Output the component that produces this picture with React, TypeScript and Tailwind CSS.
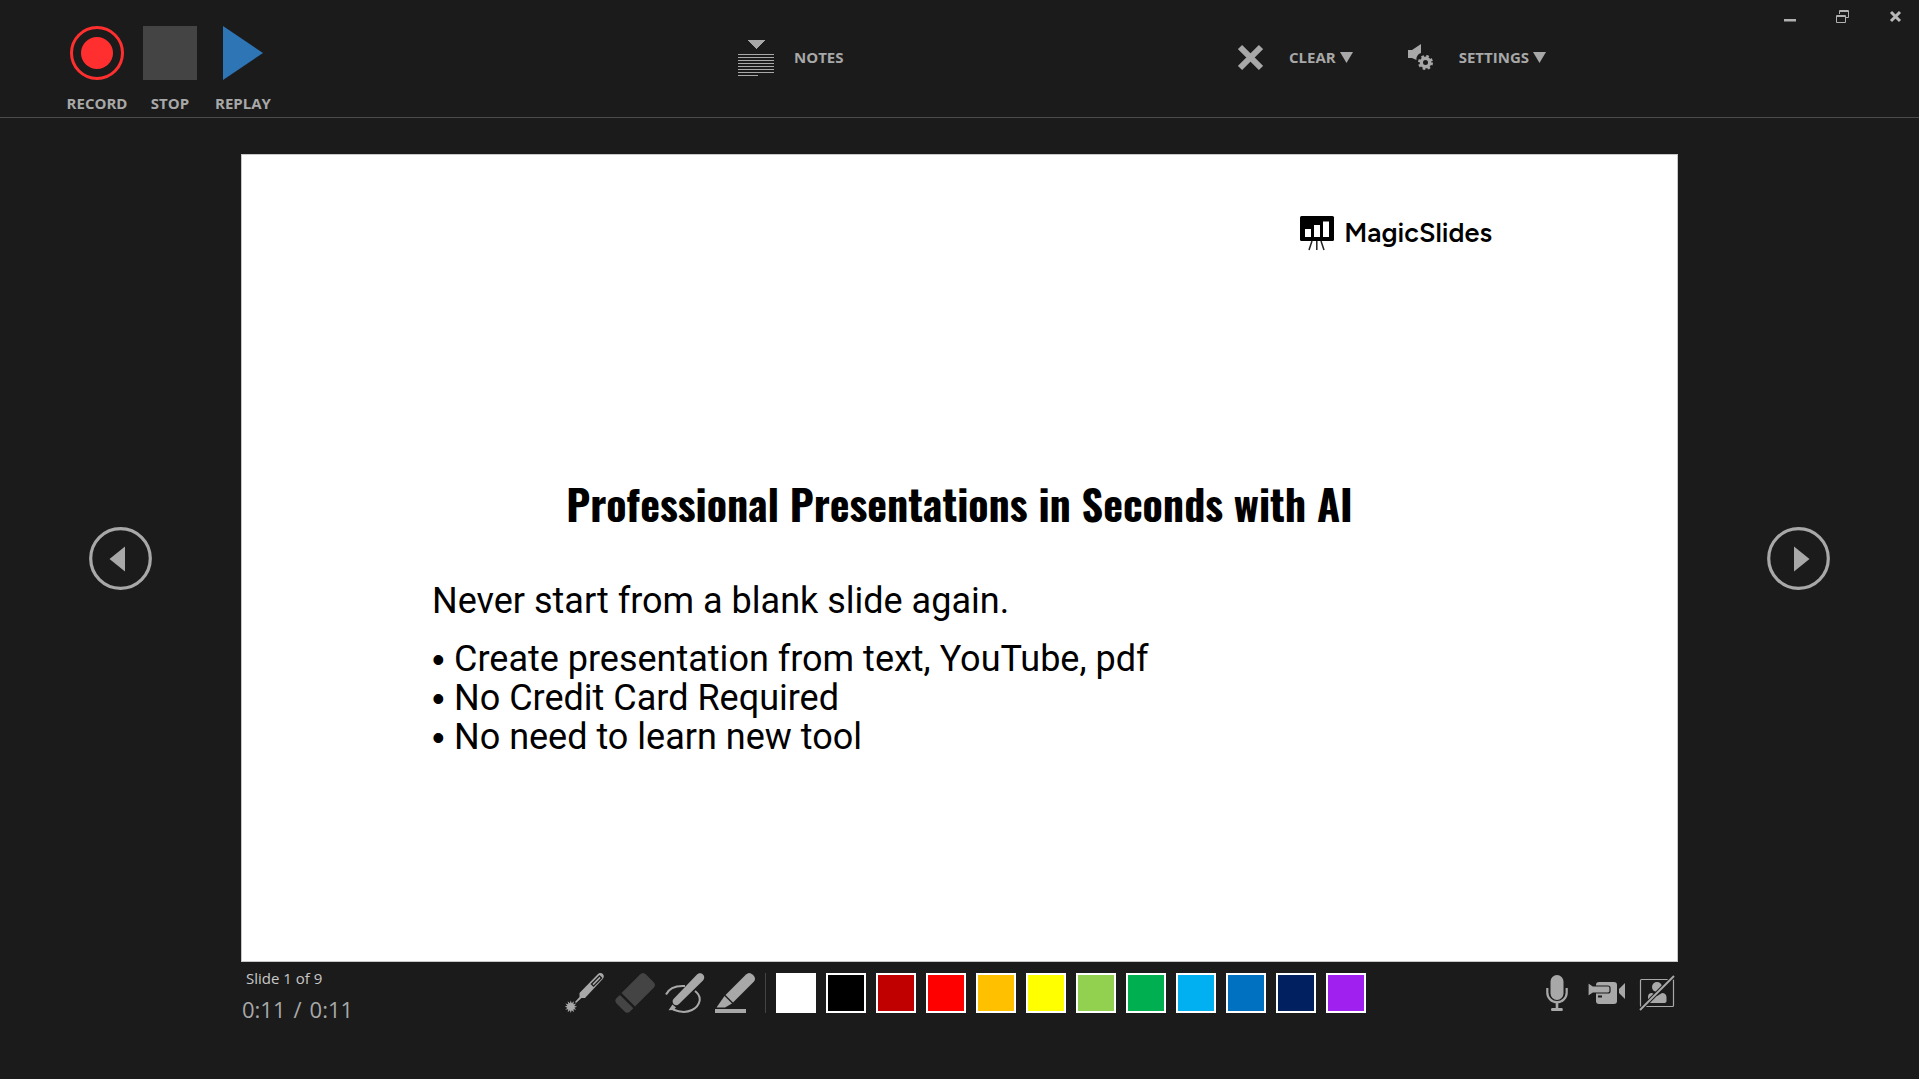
import React from "react";

const swatches = [
  { name: "White", fill: "bg-white" },
  { name: "Black", fill: "bg-black" },
  { name: "Dark red", fill: "bg-[#c00000]" },
  { name: "Red", fill: "bg-[#ff0000]" },
  { name: "Orange", fill: "bg-[#ffc000]" },
  { name: "Yellow", fill: "bg-[#ffff00]" },
  { name: "Light green", fill: "bg-[#92d050]" },
  { name: "Green", fill: "bg-[#00b050]" },
  { name: "Light blue", fill: "bg-[#00b0f0]" },
  { name: "Blue", fill: "bg-[#0070c0]" },
  { name: "Dark blue", fill: "bg-[#002060]" },
  { name: "Purple", fill: "bg-[#a020f0]" },
];

const bullets = [
  "Create presentation from text, YouTube, pdf",
  "No Credit Card Required",
  "No need to learn new tool",
];

// Twelve-pointed spark at the tip of the laser pointer.
const spark = Array.from({ length: 24 }, (_, i) => {
  const r = i % 2 ? 3.6 : 6.3;
  const a = (i * Math.PI) / 12;
  return `${(5.8 + r * Math.sin(a)).toFixed(2)},${(33.7 - r * Math.cos(a)).toFixed(2)}`;
}).join(" ");

function TransportButton({ label, children }: { label: string; children: React.ReactNode }) {
  return (
    <button className="flex w-[58px] flex-col items-center gap-[13px]">
      <svg width="54" height="54" viewBox="0 0 54 54" aria-hidden="true">
        {children}
      </svg>
      <span>{label}</span>
    </button>
  );
}

function Caret() {
  return (
    <svg width="13" height="11" viewBox="0 0 13 11" fill="#a8a8a8" aria-hidden="true">
      <path d="M0 0h13L6.500 11z" />
    </svg>
  );
}

function Header() {
  return (
    <header className="grid h-[118px] grid-cols-[738fr_500fr_681fr] border-b border-[#4b4b4b] text-[15px] leading-5 font-bold">
      <div className="flex items-start gap-[15px] pt-[26px] pl-[68px]">
        <TransportButton label="RECORD">
          <circle cx="27" cy="27" r="25.5" fill="none" stroke="#ff2f2f" strokeWidth="3" />
          <circle cx="27" cy="27" r="16" fill="#ff2f2f" />
        </TransportButton>
        <TransportButton label="STOP">
          <path d="M0 0h54v54H0z" fill="#444" />
        </TransportButton>
        <TransportButton label="REPLAY">
          <path d="M7 0l40 27L7 54z" fill="#2e75b6" />
        </TransportButton>
      </div>
      <div className="flex items-start pt-10">
        <button className="flex items-center gap-5">
          <svg width="36" height="36" viewBox="0 0 36 36" fill="#a8a8a8" shapeRendering="crispEdges" aria-hidden="true">
            <path d="M9 0h18l-9 9z" />
            <path d="M0 14h36v1H0zM0 17h36v1H0zM0 20h36v1H0zM0 23h36v1H0zM0 26h36v1H0zM0 29h36v1H0zM0 32h36v1H0zM0 35h20v1H0z" />
          </svg>
          <span className="pb-0.5">NOTES</span>
        </button>
      </div>
      <div className="flex items-start">
        <div className="flex gap-[54px] pt-11">
          <button className="flex items-center gap-[26px]">
            <svg width="25" height="27" viewBox="1 0 25 27" stroke="#a8a8a8" strokeWidth="6" aria-hidden="true">
              <path d="M3 3l21 21M24 3l-21 21" />
            </svg>
            <span className="flex items-center gap-1">
              <span className="pb-0.5">CLEAR</span>
              <Caret />
            </span>
          </button>
          <button className="flex items-center gap-[25px]">
            <svg width="27" height="27" viewBox="0 0 27 27" aria-hidden="true">
              <path d="M1 6h4l9-6v9c-3 1-5 4-4.500 7L5 14H1z" fill="#a8a8a8" />
              <circle cx="18.500" cy="18.500" r="4.200" fill="none" stroke="#a8a8a8" strokeWidth="3.400" />
              <circle cx="18.500" cy="18.500" r="6.300" fill="none" stroke="#a8a8a8" strokeWidth="2.400" strokeDasharray="2.600 2.350" />
            </svg>
            <span className="flex items-center gap-1">
              <span className="pb-0.5">SETTINGS</span>
              <Caret />
            </span>
          </button>
        </div>
        <div className="ml-auto flex gap-10 pt-[10px] pr-[17px]">
          <button aria-label="Minimize">
            <svg width="13" height="13" viewBox="0 0 13 13" fill="#b0b0b0">
              <path d="M1 9h12v2.500H1z" />
            </svg>
          </button>
          <button aria-label="Restore">
            <svg width="13" height="13" viewBox="0 0 13 13" fill="none" stroke="#b0b0b0">
              <path d="M3.500 4V.5h9v7H10M3.500 1.500h9M.5 5.500h9v7h-9zM.5 6.500h9" />
            </svg>
          </button>
          <button aria-label="Close">
            <svg width="13" height="13" viewBox="0 0 13 13" stroke="#b8b8b8" strokeWidth="3">
              <path d="M2 2l9 9M11 2l-9 9" />
            </svg>
          </button>
        </div>
      </div>
    </header>
  );
}

function NavButton({ label, d }: { label: string; d: string }) {
  return (
    <div className="flex w-[241px] shrink-0 items-center justify-center">
      <button aria-label={label}>
        <svg width="63" height="63" viewBox="0 0 63 63">
          <circle cx="31.500" cy="31.500" r="29.800" fill="none" stroke="#a8a8a8" strokeWidth="3.200" />
          <path d={d} fill="#a8a8a8" />
        </svg>
      </button>
    </div>
  );
}

function Slide() {
  return (
    <section className="flex aspect-video flex-1 flex-col border border-[#c8c8c8] bg-white text-black">
      <div className="flex items-center justify-end gap-2 pt-[59px] pr-[185px]">
        <svg width="36" height="38" viewBox="0 0 36 38" aria-hidden="true">
          <rect x="0" y="2" width="34" height="25" rx="1.500" fill="#000" />
          <path d="M5 15h6v8H5zM14 11h6v12h-6zM23 7.500h6V23h-6z" fill="#fff" />
          <path d="M12 27l-3 9M16.800 27v9M21 27l3 9" stroke="#222" strokeWidth="1.500" fill="none" />
        </svg>
        <span className="font-['Figtree','Outfit',Lato,sans-serif] text-[27px] leading-9 font-semibold">MagicSlides</span>
      </div>
      <h1 className="mt-[221px] text-center font-['Oswald','Liberation_Sans_Narrow',Roboto,sans-serif] text-[42px] leading-[60px] font-bold">
        Professional Presentations in Seconds with AI
      </h1>
      <div className="mt-[49px] pl-[190px] font-[Roboto,sans-serif] text-[36px]">
        <p className="leading-[39px]">Never start from a blank slide again.</p>
        <ul className="mt-[19px] leading-[39px]">
          {bullets.map((b) => (
            <li key={b} className="flex">
              <span className="w-[22px] font-['Liberation_Sans',sans-serif]">•</span>
              {b}
            </li>
          ))}
        </ul>
      </div>
    </section>
  );
}

function Tools() {
  return (
    <div className="flex h-10 items-center gap-[10px]">
      <button aria-label="Laser pointer">
        <svg width="40" height="40" viewBox="0 0 40 40" fill="#a8a8a8">
          <path d="M32.500 1.500c2-2 4-1.800 5.300-.5s1.500 3.300-.3 5.200L20 25h-3.500L11 30l-1-1 4.500-5V20z" />
          <path d="M28.500 11l6-6" stroke="#1b1b1b" strokeWidth="4.200" strokeLinecap="square" />
          <path d="M28.500 11l6-6" stroke="#a8a8a8" strokeWidth="1.600" strokeLinecap="square" />
          <polygon points={spark} />
        </svg>
      </button>
      <button aria-label="Eraser">
        <svg width="40" height="40" viewBox="0 0 40 40" fill="#444">
          <path d="M25 1.500c2-2 4-2 6 0l7.500 7.500c2 2 2 4 0 6L20 33.500 6.500 20z" />
          <path d="M5 22l13.300 13.300-3 3c-2 2-4 2-6 0l-7.500-7.500c-2-2-2-4 0-6z" />
        </svg>
      </button>
      <button aria-label="Pen">
        <svg width="40" height="40" viewBox="0 0 40 40" fill="none">
          <path d="M1 21.500C4 15 11 12.500 20 13M30 18c8 6 5 15-3 19-6 3-13 2-19-.5" stroke="#a8a8a8" strokeWidth="2" />
          <path d="M32 1.500c2-2 4.500-1.500 6 0s1.800 4 0 6L14 31c-2 2-4 1.500-5.300.2S7 27.500 9 25.500z" fill="#a8a8a8" />
          <path d="M7.500 31.500l3.500 3-2.500 2.500-5 .3z" fill="#a8a8a8" />
        </svg>
      </button>
      <button aria-label="Highlighter">
        <svg width="40" height="40" viewBox="0 0 40 40" fill="#a8a8a8">
          <path d="M31 1.500c2-2 4.500-2 6.500 0l1 1c2 2 2 4.500 0 6.500L18 29.500 10.500 22z" />
          <path d="M9.500 23l7.500 7.500-7 4H1.500z" />
          <path d="M0 36h31v4H0z" />
        </svg>
      </button>
      <div className="h-10 w-px bg-[#444]" />
      {swatches.map((s) => (
        <button key={s.name} aria-label={s.name} className={`size-10 border-2 border-white ${s.fill}`} />
      ))}
    </div>
  );
}

function Devices() {
  return (
    <div className="flex h-10 items-center justify-end gap-[13px] pr-[244px]">
      <button aria-label="Microphone">
        <svg width="22" height="38" viewBox="0 0 22 38">
          <rect x="4.500" y="1" width="13" height="25" rx="6.500" fill="#a8a8a8" />
          <path d="M1.300 14v4.500a9.700 9.700 0 0 0 19.400 0V14" fill="none" stroke="#a8a8a8" strokeWidth="2.200" />
          <path d="M9.700 27h2.600v7H16q.8 0 .8 1.500T16 37H6q-1 0-1-1.500T6 34h3.700z" fill="#a8a8a8" />
        </svg>
      </button>
      <button aria-label="Camera" className="ml-[7px]">
        <svg width="38" height="38" viewBox="0 0 38 38" fill="#a8a8a8">
          <path d="M11 8h15q3 0 3 3v16q0 3-3 3H11q-3 0-3-3V11q0-3 3-3z" />
          <path d="M31 15l6-6v16l-6-6z" />
          <path d="M0 8.500l5 3.500h15q2 0 2 2v3q0 2-2 2H5l-5 3.500z" stroke="#1b1b1b" strokeWidth="1.200" />
          <path d="M10 21.500h4v2h-4z" fill="#1b1b1b" />
        </svg>
      </button>
      <button aria-label="Camera preview off">
        <svg width="36" height="38" viewBox="0 0 36 38">
          <rect x="1.500" y="5.500" width="33" height="27" rx="1" fill="none" stroke="#a8a8a8" strokeWidth="1.200" />
          <circle cx="18" cy="13" r="5" fill="#a8a8a8" />
          <path d="M9 29v-6q0-4 4-4l5 3 5-3q4 0 4.500 4v4q0 2-3 2z" fill="#a8a8a8" />
          <path d="M1 36L35 2" stroke="#1b1b1b" strokeWidth="4" />
          <path d="M1 36L35 2" stroke="#a8a8a8" strokeWidth="2" />
        </svg>
      </button>
    </div>
  );
}

export default function App() {
  return (
    <div className="min-h-screen bg-[#1b1b1b] font-['Segoe_UI','Open_Sans','Noto_Sans',sans-serif] text-[#a8a8a8]">
      <Header />
      <main className="flex pt-9">
        <NavButton label="Previous slide" d="M36 19.500v25L20.500 32z" />
        <Slide />
        <NavButton label="Next slide" d="M27 19.500v25L42.500 32z" />
      </main>
      <footer className="grid grid-cols-[566fr_800fr_553fr] pt-[11px]">
        <div className="pl-[242px]">
          <p className="pl-1 text-[15px] leading-[10px] text-[#c8c8c8]">Slide 1 of 9</p>
          <p className="mt-3 flex gap-2 text-[22px] leading-7">
            <span>0:11</span>
            <span>/</span>
            <span>0:11</span>
          </p>
        </div>
        <Tools />
        <Devices />
      </footer>
    </div>
  );
}
